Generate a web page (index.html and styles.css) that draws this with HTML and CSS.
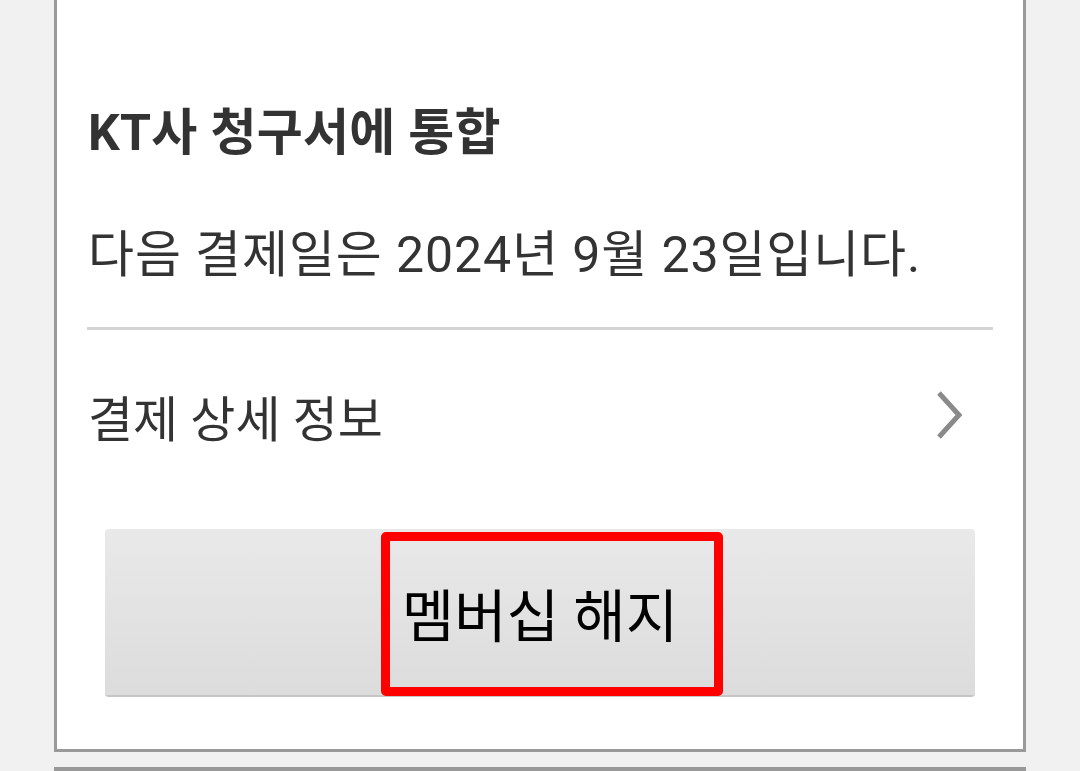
FILE: index.html
```html
<!DOCTYPE html>
<html lang="ko">
<head>
<meta charset="utf-8">
<link rel="stylesheet" href="styles.css">
</head>
<body>
<div class="card">
  <div class="row title">KT사 청구서에 통합</div>
  <div class="row info">다음 결제일은 2024년 9월 23일입니다.</div>
  <div class="divider"></div>
  <div class="row detail">
    <span>결제 상세 정보</span>
    <svg class="chev" width="30" height="56" viewBox="0 0 30 56"><path d="M4 6 L24 28 L4 50" fill="none" stroke="#8a8a8a" stroke-width="5"/></svg>
  </div>
  <div class="btn">
    <span>멤버십 해지</span>
    <div class="mark"></div>
  </div>
</div>
<div class="card next"></div>
</body>
</html>
```
FILE: styles.css
```css
html, body {
  margin: 0;
  padding: 0;
  background: #f1f1f1;
  font-family: "Roboto", "Noto Sans CJK KR", sans-serif;
  overflow: hidden;
}
.card {
  margin-left: 54px;
  width: 972px;
  box-sizing: border-box;
  background: #fff;
  border: 3px solid #999;
  border-top: none;
  padding: 0 30px 54px 30px;
  display: flex;
  flex-direction: column;
}
.card.next {
  margin-top: 15px;
  border-top: 3px solid #999;
  height: 2px;
  padding: 0;
}
.row {
  display: flex;
  align-items: center;
  color: #333;
  padding-left: 1px;
}
.title {
  margin-top: 88px;
  height: 80px;
  font-size: 50px;
  font-weight: bold;
  letter-spacing: 0.3px;
}
.info {
  margin-top: 42px;
  height: 80px;
  font-size: 50px;
  letter-spacing: 0.9px;
}
.divider {
  margin-top: 37px;
  height: 3px;
  background: #d4d4d4;
}
.detail {
  height: 170px;
  font-size: 49px;
  justify-content: space-between;
}
.chev {
  margin-right: 28px;
}
.btn {
  position: relative;
  margin: 29px 18px 0 18px;
  height: 166px;
  border-radius: 4px;
  background: linear-gradient(#e9e9e9, #dcdcdc);
  box-shadow: 0 2px 0 #c6c6c6;
  display: flex;
  align-items: center;
  justify-content: center;
  font-size: 57px;
  color: #000;
}
.mark {
  position: absolute;
  left: 276px;
  top: 3px;
  width: 342px;
  height: 164px;
  box-sizing: border-box;
  border: 9px solid #ff0000;
  border-radius: 5px;
}
```
